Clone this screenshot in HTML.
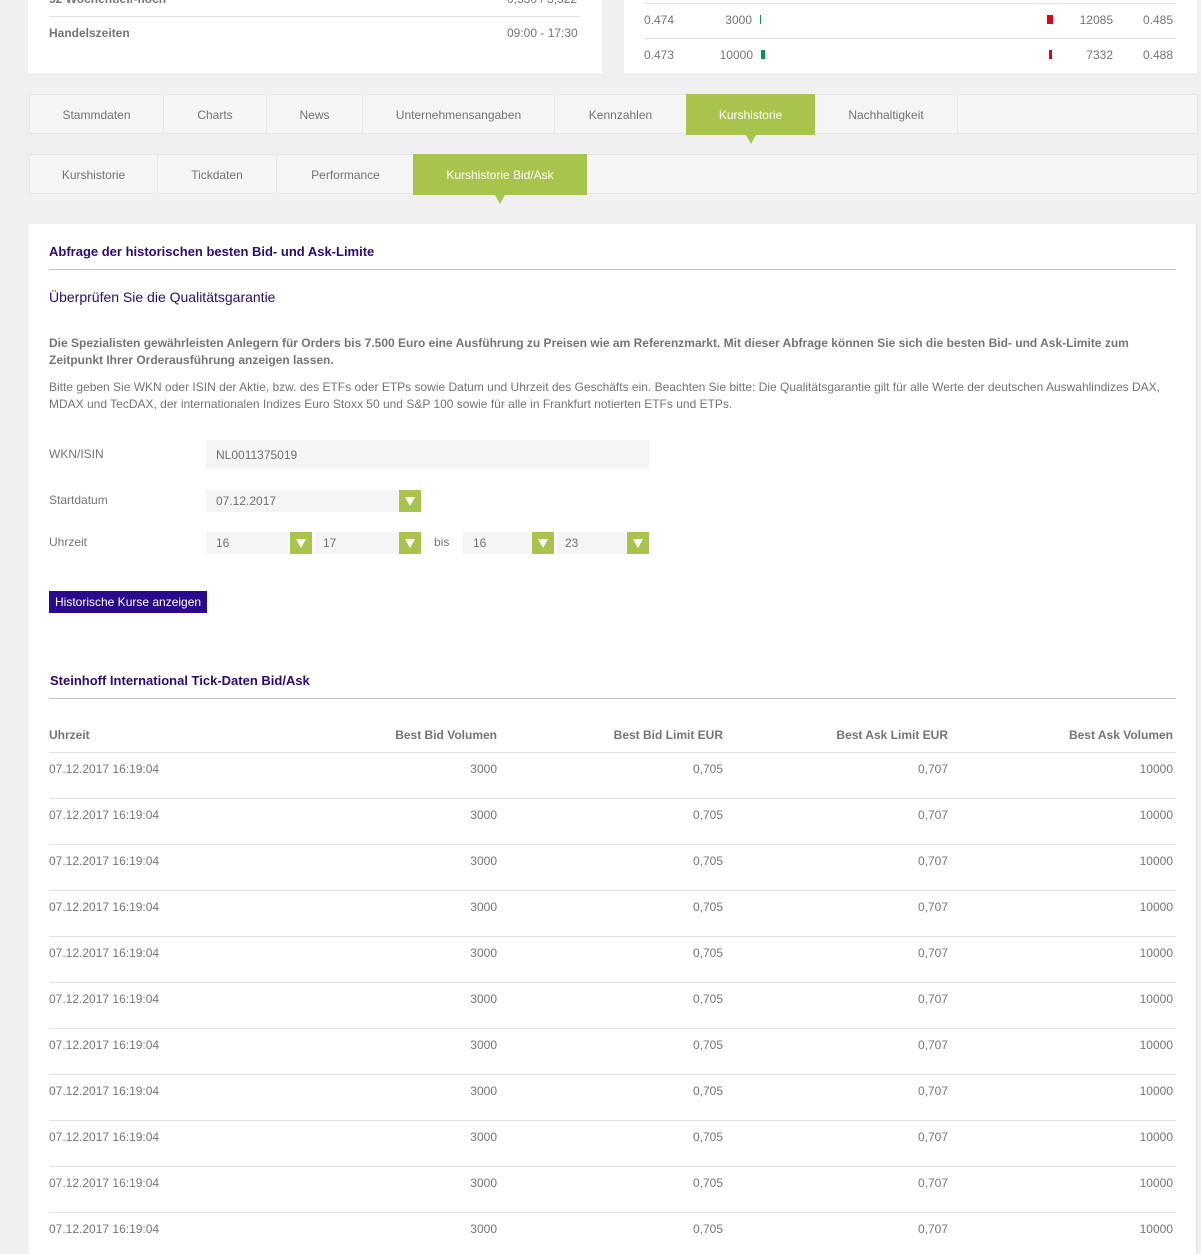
<!DOCTYPE html>
<html><head><meta charset="utf-8"><style>
*{margin:0;padding:0;box-sizing:border-box}
body{width:1201px;height:1243px;overflow:hidden;background:#f0f0f0;font-family:"Liberation Sans",Arial,sans-serif;font-size:12px;color:#747474;position:relative}
.a{position:absolute;white-space:nowrap}
.card{position:absolute;background:#fff}
.hl{position:absolute;height:1px;background:#e2e2e2}
.tabs{position:absolute;left:29px;width:1169px;height:40px;background:#f5f5f5;border:1px solid #e6e6e6}
.tab{position:absolute;top:0;height:39px;line-height:41px;text-align:center;border-right:1px solid #e6e6e6;color:#747474}
.tab.on{background:#a8c44c;color:#fff;top:-1px;height:41px;line-height:43px;border:none}
.tab.on:after{content:"";position:absolute;left:50%;margin-left:-5px;bottom:-9px;border-left:5px solid transparent;border-right:5px solid transparent;border-top:9px solid #a8c44c}
.h{color:#2a0a78;font-weight:bold;font-size:13px}
.inp{position:absolute;background:#f5f5f5;height:22px;line-height:22px;padding-left:10px;color:#6f6f6f}
.dd{position:absolute;top:0;right:0;width:22px;height:22px;background:#a8c44c}
.dd:after{content:"";position:absolute;left:6px;top:7px;border-left:5px solid transparent;border-right:5px solid transparent;border-top:9px solid #fff}
.r{text-align:right}
</style></head><body>
<div class="card" style="left:28px;top:0;width:574px;height:73px"></div>
<div class="a" style="left:49px;top:-8px;font-weight:bold">52 Wochentief/-hoch</div>
<div class="a" style="left:507px;top:-8px">0,530 / 3,522</div>
<div class="hl" style="left:49px;top:16px;width:530px"></div>
<div class="a" style="left:49px;top:26px;font-weight:bold">Handelszeiten</div>
<div class="a" style="left:507px;top:26px">09:00 - 17:30</div>

<div class="card" style="left:624px;top:0;width:573px;height:73px"></div>
<div class="hl" style="left:644px;top:3px;width:532px"></div>
<div class="hl" style="left:644px;top:38px;width:532px"></div>
<div class="a" style="left:644px;top:13px">0.474</div>
<div class="a r" style="left:700px;width:52px;top:13px">3000</div>
<div class="a" style="left:760px;top:15px;width:1px;height:9px;background:#0a9447"></div>
<div class="a" style="left:1047px;top:15px;width:6px;height:9px;background:#e0001a"></div>
<div class="a r" style="left:1061px;width:52px;top:13px">12085</div>
<div class="a r" style="left:1121px;width:52px;top:13px">0.485</div>
<div class="a" style="left:644px;top:48px">0.473</div>
<div class="a r" style="left:701px;width:52px;top:48px">10000</div>
<div class="a" style="left:761px;top:50px;width:4px;height:9px;background:#0a9447"></div>
<div class="a" style="left:1049px;top:50px;width:3px;height:9px;background:#e0001a"></div>
<div class="a r" style="left:1061px;width:52px;top:48px">7332</div>
<div class="a r" style="left:1121px;width:52px;top:48px">0.488</div>

<div class="tabs" style="top:94px">
<div class="tab" style="left:0;width:134px">Stammdaten</div>
<div class="tab" style="left:134px;width:103px">Charts</div>
<div class="tab" style="left:237px;width:96px">News</div>
<div class="tab" style="left:333px;width:192px">Unternehmensangaben</div>
<div class="tab" style="left:525px;width:132px">Kennzahlen</div>
<div class="tab on" style="left:656px;width:129px">Kurshistorie</div>
<div class="tab" style="left:785px;width:143px">Nachhaltigkeit</div>
</div>
<div class="tabs" style="top:154px">
<div class="tab" style="left:0;width:128px">Kurshistorie</div>
<div class="tab" style="left:128px;width:119px">Tickdaten</div>
<div class="tab" style="left:247px;width:137px;border:none">Performance</div>
<div class="tab on" style="left:383px;width:174px">Kurshistorie Bid/Ask</div>
</div>

<div class="card" style="left:29px;top:224px;width:1168px;height:1030px;border-right:1px solid #e0e0e0"></div>
<div class="a h" style="left:49px;top:244px">Abfrage der historischen besten Bid- und Ask-Limite</div>
<div class="hl" style="left:49px;top:269px;width:1127px;background:#c4c4c4"></div>
<div class="a" style="left:49px;top:289px;font-size:14px;color:#2a0a78">Überprüfen Sie die Qualitätsgarantie</div>
<div class="a" style="left:49px;top:335px;font-weight:bold;line-height:17px;white-space:normal;width:1120px">Die Spezialisten gewährleisten Anlegern für Orders bis 7.500 Euro eine Ausführung zu Preisen wie am Referenzmarkt. Mit dieser Abfrage können Sie sich die besten Bid- und Ask-Limite zum Zeitpunkt Ihrer Orderausführung anzeigen lassen.</div>
<div class="a" style="left:49px;top:379px;line-height:17px;white-space:normal;width:1125px">Bitte geben Sie WKN oder ISIN der Aktie, bzw. des ETFs oder ETPs sowie Datum und Uhrzeit des Geschäfts ein. Beachten Sie bitte: Die Qualitätsgarantie gilt für alle Werte der deutschen Auswahlindizes DAX, MDAX und TecDAX, der internationalen Indizes Euro Stoxx 50 und S&amp;P 100 sowie für alle in Frankfurt notierten ETFs und ETPs.</div>

<div class="a" style="left:49px;top:447px">WKN/ISIN</div>
<div class="inp" style="left:206px;top:440px;width:443px;height:29px;line-height:30px">NL0011375019</div>
<div class="a" style="left:49px;top:493px">Startdatum</div>
<div class="inp" style="left:206px;top:490px;width:215px">07.12.2017<div class="dd"></div></div>
<div class="a" style="left:49px;top:535px">Uhrzeit</div>
<div class="inp" style="left:206px;top:532px;width:106px">16<div class="dd"></div></div>
<div class="inp" style="left:315px;top:532px;width:106px;padding-left:8px">17<div class="dd"></div></div>
<div class="a" style="left:434px;top:535px">bis</div>
<div class="inp" style="left:463px;top:532px;width:91px">16<div class="dd"></div></div>
<div class="inp" style="left:557px;top:532px;width:92px;padding-left:8px">23<div class="dd"></div></div>
<div class="a" style="left:49px;top:591px;width:158px;height:22px;line-height:22px;background:#2a0a8a;color:#fff;padding-left:6px">Historische Kurse anzeigen</div>

<div class="a h" style="left:50px;top:673px">Steinhoff International Tick-Daten Bid/Ask</div>
<div class="hl" style="left:49px;top:698px;width:1127px;background:#c4c4c4"></div>
<div class="a" style="left:49px;top:728px;font-weight:bold">Uhrzeit</div>
<div class="a r" style="left:297px;width:200px;top:728px;font-weight:bold">Best Bid Volumen</div>
<div class="a r" style="left:523px;width:200px;top:728px;font-weight:bold">Best Bid Limit EUR</div>
<div class="a r" style="left:748px;width:200px;top:728px;font-weight:bold">Best Ask Limit EUR</div>
<div class="a r" style="left:973px;width:200px;top:728px;font-weight:bold">Best Ask Volumen</div>
<div class="hl" style="left:49px;top:752px;width:1127px"></div>
<div id="rows"></div>
<script>
var h='';for(var i=0;i<11;i++){var t=762+46*i;
h+='<div class="a" style="left:49px;top:'+t+'px">07.12.2017 16:19:04</div>'+
'<div class="a r" style="left:297px;width:200px;top:'+t+'px">3000</div>'+
'<div class="a r" style="left:523px;width:200px;top:'+t+'px">0,705</div>'+
'<div class="a r" style="left:748px;width:200px;top:'+t+'px">0,707</div>'+
'<div class="a r" style="left:973px;width:200px;top:'+t+'px">10000</div>';
if(i<10)h+='<div class="hl" style="left:49px;top:'+(t+36)+'px;width:1127px"></div>';}
document.getElementById('rows').innerHTML=h;
</script>
</body></html>
